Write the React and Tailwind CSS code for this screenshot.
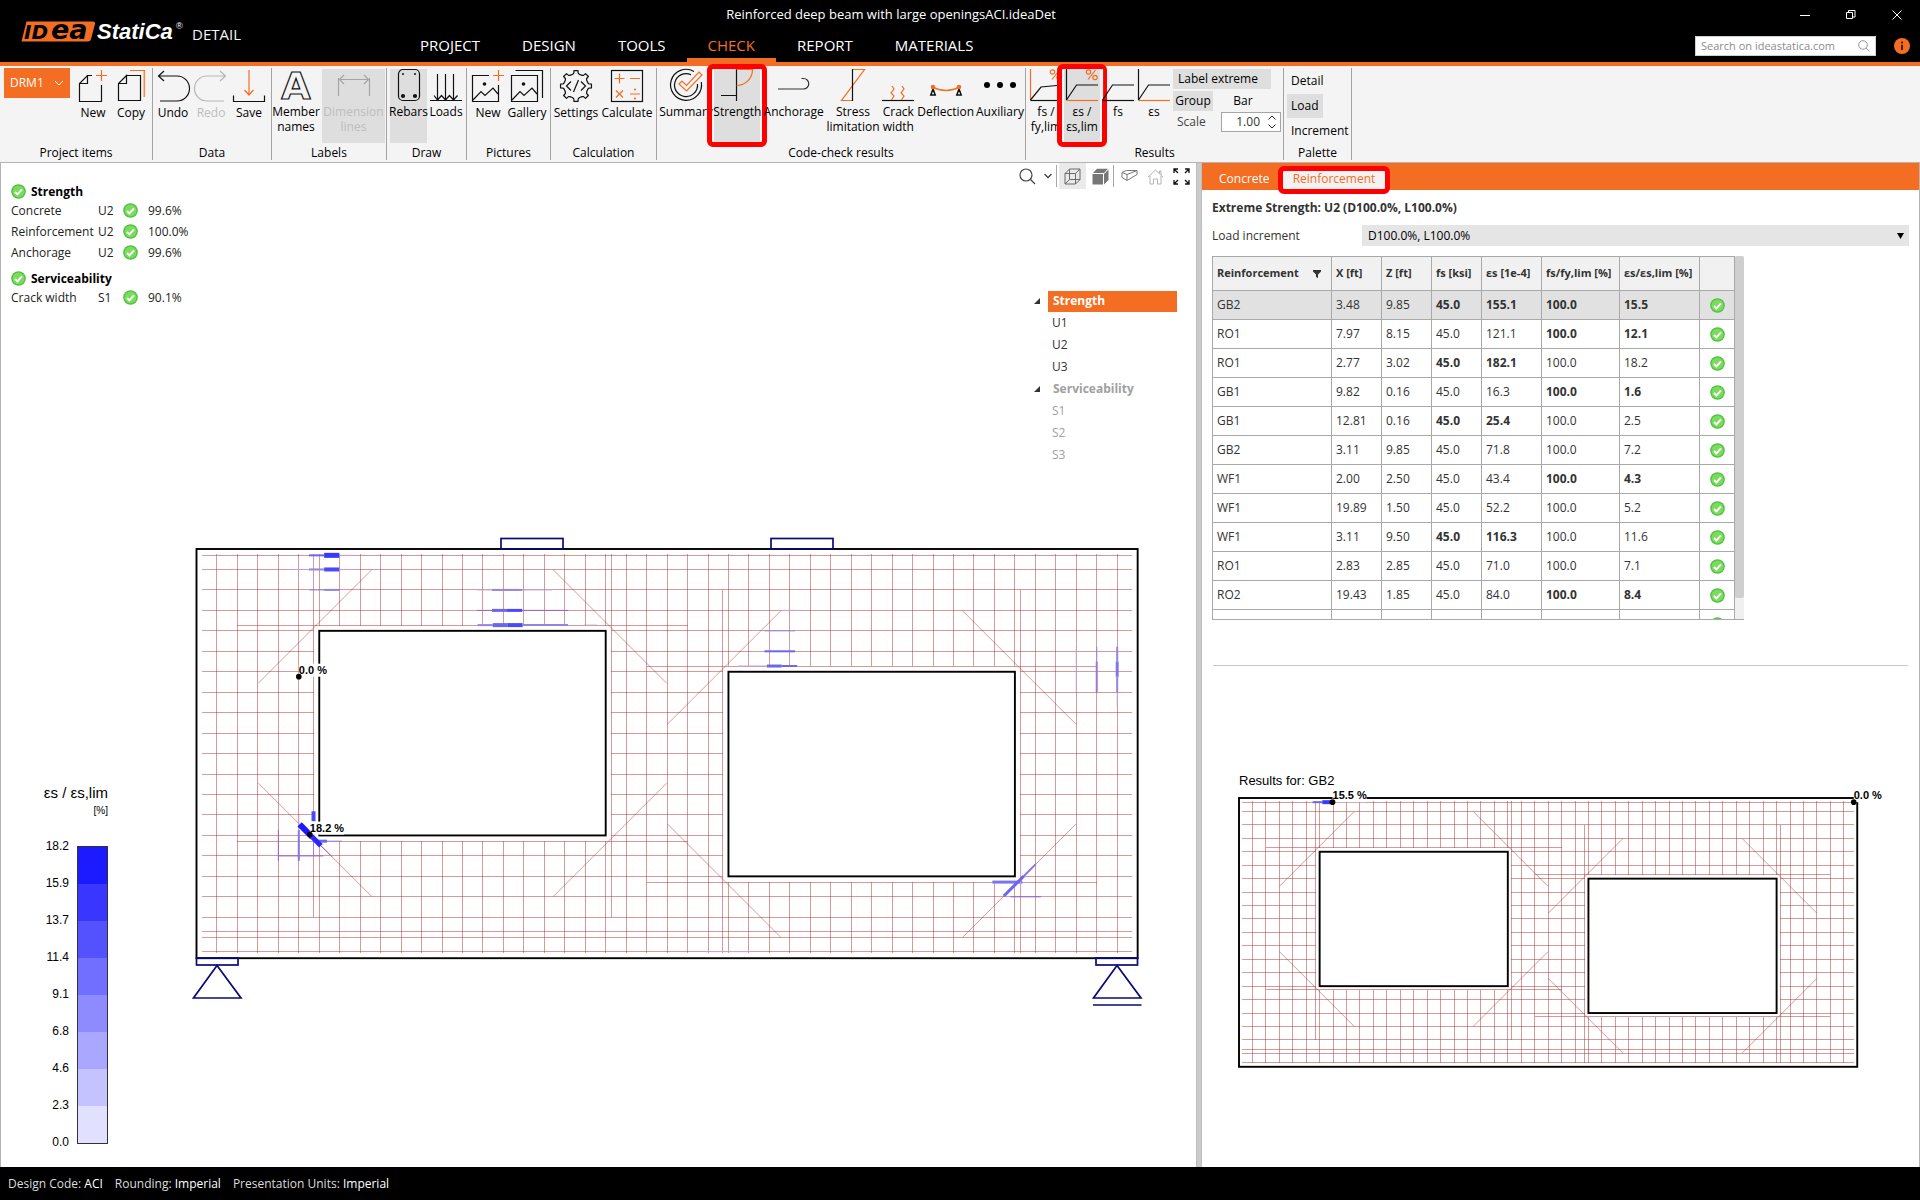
import React from "react";

const ORANGE = "#f36e22";

/* ---------- small icons ---------- */

function Ok({ className = "h-[15px] w-[15px]" }) {
  return (
    <svg viewBox="0 0 15 15" className={`${className} shrink-0`} aria-label="OK" role="img">
      <circle cx="7.5" cy="7.5" r="7.3" fill="#4fbf43" />
      <circle cx="7.5" cy="7.5" r="6" fill="#7bdb5c" />
      <path d="M4 8l2.4 2.4L11 5.4" fill="none" stroke="#fff" strokeWidth="2" />
    </svg>
  );
}

function Icon({ children, className = "" }) {
  return (
    <svg
      viewBox="0 0 32 32"
      className={`h-8 w-8 shrink-0 overflow-visible ${className}`}
      fill="none"
      stroke="#111"
      strokeWidth="1.2"
      aria-hidden="true"
    >
      {children}
    </svg>
  );
}

const gearPath = (() => {
  const pts = [];
  const teeth = 8;
  for (let i = 0; i < teeth; i++) {
    const base = (i * 2 * Math.PI) / teeth - Math.PI / 2;
    [
      [-0.27, 12.2],
      [-0.17, 13],
      [-0.13, 15.6],
      [0.13, 15.6],
      [0.17, 13],
      [0.27, 12.2],
    ].forEach(([a, r]) => {
      pts.push(`${(16 + r * Math.cos(base + a)).toFixed(2)} ${(16 + r * Math.sin(base + a)).toFixed(2)}`);
    });
  }
  return `M${pts.join("L")}Z`;
})();

const icons = {
  newItem: (
    <Icon>
      <path d="M15 5.500H10.500L2.500 13.500V31.500H24.500V15M2.500 13.500H10.500V5.500" />
      <path d="M24.500 0v11M19 5.500h11" stroke={ORANGE} />
    </Icon>
  ),
  copy: (
    <Icon>
      <path d="M11.500 5.500H25.500V30.500H3.500V13.500L11.500 5.500V13.500H3.500" />
      <path d="M15 .5H29.500V27" stroke={ORANGE} />
      <path d="M28.800 1V27" stroke="#f9b48c" />
    </Icon>
  ),
  undo: (
    <Icon>
      <path d="M7 1L1.500 6L7 11M1.500 6H20a12.500 12.500 0 0 1 0 25H3" />
    </Icon>
  ),
  redo: (
    <Icon>
      <path d="M25 1L30.500 6L25 11M30.500 6H12a12.500 12.500 0 0 0 0 25H29" stroke="#b5b5b5" />
    </Icon>
  ),
  save: (
    <Icon>
      <path d="M.5 25.500V31.500H31.500V25.500" />
      <path d="M16 0V25M11.500 20L16 25L20.500 20" stroke={ORANGE} />
    </Icon>
  ),
  names: (
    <Icon>
      <text
        x="16"
        y="29.500"
        textAnchor="middle"
        fontFamily="DejaVu Sans"
        fontWeight="700"
        fontSize="38"
        strokeWidth="1.200"
      >
        A
      </text>
    </Icon>
  ),
  dims: (
    <Icon>
      <path
        d="M.5 9V27M31.500 9V27M1 10.500H31M6 6L1.500 10.500L6 15M26 6L30.500 10.500L26 15"
        stroke="#a5a5a5"
      />
    </Icon>
  ),
  rebars: (
    <Icon>
      <rect x="5.500" y=".5" width="21" height="31" rx="4.500" />
      <g fill="#111" stroke="none">
        <circle cx="10" cy="5" r="1" />
        <circle cx="22" cy="5" r="1" />
        <circle cx="10" cy="27" r="2.100" />
        <circle cx="22" cy="27" r="2.100" />
      </g>
    </Icon>
  ),
  loads: (
    <Icon>
      <path d="M0 31.500H32M7.500 5V31M15.500 5V31M23.500 5V31M4 26.500L7.500 31L11.500 26.500L15.500 31L19.500 26.500L23.500 31L27.500 26.500" />
    </Icon>
  ),
  picNew: (
    <Icon>
      <path d="M17 5.500H.5V31.500H26.500V15M1 30L9 21.500L13 25.500L21 18L26 24" />
      <circle cx="12.500" cy="14" r="1.800" fill="#111" stroke="none" />
      <path d="M26.500 0v11M21 5.500h11" stroke={ORANGE} />
    </Icon>
  ),
  gallery: (
    <Icon>
      <path d="M.5 5.500H26.500V31.500H.5ZM1 30L9 21.500L13 25.500L21 18L26 24M4.500 .5H31.500V28" />
      <circle cx="12.500" cy="14" r="1.800" fill="#111" stroke="none" />
    </Icon>
  ),
  settings: (
    <Icon>
      <path d={gearPath} strokeLinejoin="round" />
      <path d="M11 11.500L6.500 16L11 20.500M21 11.500L25.500 16L21 20.500M18.500 10L13.500 22" />
    </Icon>
  ),
  calculate: (
    <Icon>
      <rect x=".5" y=".5" width="31" height="31" />
      <path
        d="M8.500 3.500v10M3.500 8.500h10M19 8.500h10M5 20.500l7 7M12 20.500l-7 7M19 24h10"
        stroke={ORANGE}
      />
      <circle cx="24" cy="19.500" r="1.100" fill={ORANGE} stroke="none" />
      <circle cx="24" cy="28.500" r="1.100" fill={ORANGE} stroke="none" />
    </Icon>
  ),
  summary: (
    <Icon>
      <path d="M24 2.500A15.500 15.500 0 1 0 31.300 13" />
      <path d="M21 5.700A11.500 11.500 0 1 0 27.500 15" />
      <path d="M9 15L12 12L16.500 16.500L29 3L32 6L16.500 22Z" stroke={ORANGE} />
    </Icon>
  ),
  strength: (
    <Icon>
      <path d="M15.500 0V32M0 26.500H15.500" />
      <path d="M15.500 .5H31.500C31.500 9 25 16.500 15.500 16.500" stroke={ORANGE} />
    </Icon>
  ),
  anchorage: (
    <Icon>
      <path d="M0 20H25.500a5 5 0 0 0 0-10.500h-2" stroke="#333" />
    </Icon>
  ),
  stress: (
    <Icon>
      <path d="M15.500 .5H27.500L4.500 31.500H15.500" stroke={ORANGE} />
      <path d="M15.500 0V32" />
    </Icon>
  ),
  crack: (
    <Icon>
      <path d="M0 31.500H32" />
      <path
        d="M10 17l2 3l-3 4l3 3l-2.500 4M20 17l2 3l-3 4l3 3l-2.500 4"
        stroke={ORANGE}
      />
    </Icon>
  ),
  deflection: (
    <Icon>
      <path d="M3 18C10 22.500 22 22.500 29 18" stroke={ORANGE} strokeWidth="1.500" />
      <path d="M3 20L.8 26H5.200ZM29 20L26.800 26H31.200Z" strokeWidth="1.500" />
      <circle cx="3" cy="18" r="2.300" fill={ORANGE} stroke="none" />
      <circle cx="29" cy="18" r="2.300" fill={ORANGE} stroke="none" />
    </Icon>
  ),
  auxiliary: (
    <Icon>
      <g fill="#000" stroke="none">
        <circle cx="3" cy="16" r="3" />
        <circle cx="16" cy="16" r="3" />
        <circle cx="29" cy="16" r="3" />
      </g>
    </Icon>
  ),
};

function CurveIcon({ axisY, axisX, percent, slope }) {
  return (
    <Icon>
      <path d="M.5 0V31" stroke={axisY} />
      <path d="M.5 31.500H32" stroke={axisX} />
      <path d={slope ? "M.5 31L11 18L32 16" : "M.5 31L10.500 16H32"} />
      {percent && (
        <g stroke={ORANGE}>
          <path d="M22 10.500L29.500 1" />
          <circle cx="22.500" cy="3" r="2.200" />
          <circle cx="29" cy="8.500" r="2.200" />
        </g>
      )}
    </Icon>
  );
}

/* ---------- header ---------- */

function Logo() {
  return (
    <svg viewBox="0 -10 170 42" className="h-[42px] w-[170px]" role="img" aria-label="IDEA StatiCa">
      <path d="M6.500 1.500H73a2 2 0 0 1 2 2.500L71 19a3 3 0 0 1-3 2.500H1.500Z" fill={ORANGE} />
      <g fontFamily="DejaVu Sans" fontWeight="700" fontStyle="italic" fill="#000">
        <text x="4" y="19" fontSize="20">ID</text>
        <text x="31" y="19" fontSize="27">ea</text>
      </g>
      <text x="77" y="19" fill="#fff" fontFamily="Liberation Sans" fontWeight="700" fontStyle="italic" fontSize="22">
        StatiCa
      </text>
      <text x="156" y="9" fill="#fff" fontFamily="Liberation Sans" fontSize="9">®</text>
    </svg>
  );
}

const TABS = ["PROJECT", "DESIGN", "TOOLS", "CHECK", "REPORT", "MATERIALS"];

function Header() {
  return (
    <header className="flex h-[66px] shrink-0 border-b-4 border-[#f36e22] bg-black text-white">
      <div className="flex w-[399px] shrink-0 items-start pt-[10px] pl-5">
        <Logo />
        <span className="ml-0.5 mt-3 text-[15px] leading-6 text-gray-100">DETAIL</span>
      </div>
      <div className="flex min-w-0 flex-1 flex-col">
        <h1 className="h-7 shrink-0 text-center text-[13px] leading-7 font-normal whitespace-nowrap">
          Reinforced deep beam with large openingsACI.ideaDet
        </h1>
        <nav className="flex flex-1">
          {TABS.map((t) => (
            <button
              key={t}
              className={
                t === "CHECK"
                  ? "border-b-4 border-[#f36e22] px-[21px] pt-1 text-[15px] leading-[26px] text-[#f36e22]"
                  : "border-b-4 border-transparent px-[21px] pt-1 text-[15px] leading-[26px]"
              }
            >
              {t}
            </button>
          ))}
        </nav>
      </div>
      <div className="flex w-[537px] shrink-0 flex-col items-end">
        <div className="flex h-9 items-start gap-9 pt-[10px] pr-[18px]">
          <button aria-label="Minimize">
            <svg viewBox="0 0 10 10" className="h-[10px] w-[10px]" stroke="#fff" fill="none">
              <path d="M0 5.500h10" />
            </svg>
          </button>
          <button aria-label="Restore">
            <svg viewBox="0 0 10 10" className="h-[10px] w-[10px]" stroke="#fff" fill="none">
              <path d="M.5 2.500h6v6h-6zM2.500 2.500v-2h6.500v6.500h-2.500" />
            </svg>
          </button>
          <button aria-label="Close">
            <svg viewBox="0 0 10 10" className="h-[10px] w-[10px]" stroke="#fff" fill="none">
              <path d="M.5 .5l9 9M9.500 .5l-9 9" />
            </svg>
          </button>
        </div>
        <div className="flex items-center gap-[18px] pr-[10px]">
          <label className="flex h-5 w-[181px] items-center border border-[#d0d0d0] bg-white px-[5px]">
            <input
              aria-label="Search"
              placeholder="Search on ideastatica.com"
              className="min-w-0 flex-1 bg-transparent text-[11px] text-gray-700 outline-none placeholder:text-[#8c8c8c]"
            />
            <svg viewBox="0 0 12 12" className="h-3 w-3" fill="none" stroke="#999">
              <circle cx="5" cy="5" r="4.300" />
              <path d="M8 8l3.500 3.500" />
            </svg>
          </label>
          <button aria-label="Information">
            <svg viewBox="0 0 16 16" className="h-4 w-4">
              <circle cx="8" cy="8" r="8" fill={ORANGE} />
              <path d="M8 3.500v2M8 6.800v5.200" stroke="#3a1a05" strokeWidth="1.800" />
            </svg>
          </button>
        </div>
      </div>
    </header>
  );
}

/* ---------- ribbon ---------- */

function Tool({ icon, label, width, on, low, disabled, marked }) {
  return (
    <button
      disabled={disabled}
      className={`relative flex h-[74px] shrink-0 flex-col items-center ${width} ${on ? "bg-[#dedede]" : ""} ${
        low ? "pt-px" : ""
      }`}
    >
      {icon}
      <span
        className={`mt-[3px] text-center text-xs leading-[15px] whitespace-pre ${
          disabled ? "text-[#bdbdbd]" : "text-black"
        }`}
      >
        {label}
      </span>
      {marked && (
        <span className="absolute -inset-x-[7px] -top-[5px] -bottom-1 rounded-md border-[5px] border-[#fe0000]" />
      )}
    </button>
  );
}

function Group({ title, width, pad = "", children }) {
  return (
    <section className={`mt-0.5 mb-0.5 flex shrink-0 flex-col border-r border-[#a3a3a3] ${width}`}>
      <div className={`flex h-[75px] pt-px ${pad}`}>{children}</div>
      <h2 className="text-center text-xs leading-5 font-normal text-black">{title}</h2>
    </section>
  );
}

function Ribbon() {
  return (
    <div className="flex h-[97px] shrink-0 border-b border-[#b4b4b4] bg-[#f4f4f4]">
      <Group title="Project items" width="w-[153px]" pad="pl-1">
        <button className="-mt-px mr-1 flex h-[30px] w-[66px] items-center justify-between bg-[#f36e22] px-1.5 text-xs text-white">
          DRM1
          <svg viewBox="0 0 10 6" className="h-1.5 w-[10px]" fill="none" stroke="#fff">
            <path d="M1 1l4 4l4-4" />
          </svg>
        </button>
        <Tool low icon={icons.newItem} label="New" width="w-[38px]" />
        <Tool low icon={icons.copy} label="Copy" width="w-[38px]" />
      </Group>
      <Group title="Data" width="w-[119px]" pad="pl-px">
        <Tool low icon={icons.undo} label="Undo" width="w-[38px]" />
        <Tool low icon={icons.redo} label="Redo" width="w-[38px]" disabled />
        <Tool low icon={icons.save} label="Save" width="w-[38px]" />
      </Group>
      <Group title="Labels" width="w-[115px]" pad="gap-0.5">
        <Tool icon={icons.names} label={"Member\nnames"} width="w-12" />
        <Tool icon={icons.dims} label={"Dimension\nlines"} width="w-[63px]" on disabled />
      </Group>
      <Group title="Draw" width="w-[80px]" pad="gap-px pl-[3px]">
        <Tool icon={icons.rebars} label="Rebars" width="w-[37px]" on />
        <Tool icon={icons.loads} label="Loads" width="w-[36px]" />
      </Group>
      <Group title="Pictures" width="w-[84px]" pad="gap-px pl-0.5">
        <Tool low icon={icons.picNew} label="New" width="w-[38px]" />
        <Tool low icon={icons.gallery} label="Gallery" width="w-[38px]" />
      </Group>
      <Group title="Calculation" width="w-[106px]" pad="gap-px">
        <Tool low icon={icons.settings} label="Settings" width="w-[50px]" />
        <Tool low icon={icons.calculate} label="Calculate" width="w-[50px]" />
      </Group>
      <Group title="Code-check results" width="w-[369px]" pad="justify-between pr-0.5 pl-1">
        <Tool icon={icons.summary} label="Summary" width="w-[50px]" />
        <Tool icon={icons.strength} label="Strength" width="w-[46px]" on marked />
        <Tool icon={icons.anchorage} label="Anchorage" width="w-[60px]" />
        <Tool icon={icons.stress} label={"Stress\nlimitation"} width="w-[52px]" />
        <Tool icon={icons.crack} label={"Crack\nwidth"} width="w-8" />
        <Tool icon={icons.deflection} label="Deflection" width="w-[56px]" />
        <Tool icon={icons.auxiliary} label="Auxiliary" width="w-[46px]" />
      </Group>
      <Group title="Results" width="w-[258px]" pad="pl-0.5">
        <Tool icon={<CurveIcon axisY={ORANGE} axisX="#111" percent slope />} label={"fs /\nfy,lim"} width="w-[36px]" />
        <Tool
          icon={<CurveIcon axisY="#111" axisX={ORANGE} percent />}
          label={"εs /\nεs,lim"}
          width="w-[36px]"
          on
          marked
        />
        <Tool icon={<CurveIcon axisY="#f4f4f4" axisX="#111" />} label="fs" width="w-[36px]" />
        <Tool icon={<CurveIcon axisY="#111" axisX={ORANGE} />} label="εs" width="w-[36px]" />
        <div className="ml-px flex flex-1 flex-col pr-0.5 text-xs text-black">
          <button className="h-5 w-[98px] bg-[#dedede] pl-[5px] text-left leading-5">Label extreme</button>
          <div className="mt-0.5 flex h-5 items-center">
            <button className="h-5 w-10 bg-[#dedede] leading-5">Group</button>
            <button className="ml-[18px] w-6">Bar</button>
          </div>
          <div className="mt-px flex h-5 items-center justify-between">
            <label htmlFor="scale" className="pl-1 text-[#444]">
              Scale
            </label>
            <div className="flex h-5 w-[60px] items-center border border-[#a6a6a6] bg-white pr-1">
              <input
                id="scale"
                defaultValue="1.00"
                className="w-full min-w-0 pr-2 text-right text-xs text-[#333] outline-none"
              />
              <div className="flex flex-col gap-1">
                <button aria-label="Increase scale">
                  <svg viewBox="0 0 8 5" className="block h-[5px] w-2" fill="none" stroke="#222">
                    <path d="M.5 4.500L4 1l3.500 3.500" />
                  </svg>
                </button>
                <button aria-label="Decrease scale">
                  <svg viewBox="0 0 8 5" className="block h-[5px] w-2" fill="none" stroke="#222">
                    <path d="M.5 .5L4 4l3.500-3.500" />
                  </svg>
                </button>
              </div>
            </div>
          </div>
        </div>
      </Group>
      <Group title="Palette" width="w-[68px]" pad="pl-[3px]">
        <div className="flex flex-col items-start gap-0.5 text-xs text-black">
          <button className="h-6 px-1">Detail</button>
          <button className="h-6 bg-[#dedede] px-1">Load</button>
          <button className="h-6 px-1">Increment</button>
        </div>
      </Group>
    </div>
  );
}

/* ---------- beam drawing (dimensions in feet) ---------- */

const LENGTH = 23;
const HEIGHT = 10;
const OPENINGS = [
  { x1: 3, x2: 10, y1: 2, y2: 7 },
  { x1: 13, x2: 20, y1: 3, y2: 8 },
];
const COVER = 0.13;

function meshLines() {
  const lines = [];
  for (let x = 0.5; x <= 22.5; x += 0.5) {
    const o = OPENINGS.find((k) => x >= k.x1 && x <= k.x2);
    if (o) {
      lines.push([x, COVER, x, o.y1 - COVER], [x, o.y2 + COVER, x, HEIGHT - COVER]);
    } else {
      lines.push([x, COVER, x, HEIGHT - COVER]);
    }
  }
  const ys = [0.155, 9.35, 9.5, 9.84];
  for (let y = 0.5; y <= 9; y += 0.5) ys.push(y);
  ys.forEach((y) => {
    let from = COVER;
    OPENINGS.forEach((o) => {
      if (y >= o.y1 && y <= o.y2) {
        lines.push([from, y, o.x1 - COVER, y]);
        from = o.x2 + COVER;
      }
    });
    lines.push([from, y, LENGTH - COVER, y]);
  });
  OPENINGS.forEach((o) => {
    const top = Math.max(COVER, o.y1 - 2);
    const bottom = o.y2 === 8 ? HEIGHT - COVER : o.y2 + 2;
    lines.push([o.x1 - 0.14, top, o.x1 - 0.14, bottom], [o.x2 + 0.14, top, o.x2 + 0.14, bottom]);
    lines.push([o.x1 - 2, o.y1 - 0.14, o.x2 + 2, o.y1 - 0.14], [o.x1 - 2, o.y2 + 0.14, o.x2 + 2, o.y2 + 0.14]);
    lines.push(
      [o.x1 - 1.49, o.y1 + 1.28, o.x1 + 1.28, o.y1 - 1.49],
      [o.x2 - 1.28, o.y1 - 1.49, o.x2 + 1.49, o.y1 + 1.28],
      [o.x1 - 1.49, o.y2 - 1.28, o.x1 + 1.28, o.y2 + 1.49],
      [o.x2 - 1.28, o.y2 + 1.49, o.x2 + 1.49, o.y2 - 1.28]
    );
  });
  return lines;
}

const MESH = meshLines();

function Beam({ x, y, scale, marks, tags }) {
  const px = (v) => x + v * scale;
  const py = (v) => y + v * scale;
  return (
    <g fill="none">
      <g stroke="#a82c2c" strokeOpacity="0.48">
        {MESH.map(([a, b, c, d], i) => (
          <line
            key={i}
            x1={px(a)}
            y1={py(b)}
            x2={px(c)}
            y2={py(d)}
            shapeRendering={a === c || b === d ? "crispEdges" : "auto"}
          />
        ))}
      </g>
      <g stroke="#000" strokeWidth="1.900">
        <rect x={x} y={y} width={LENGTH * scale} height={HEIGHT * scale} />
        {OPENINGS.map((o) => (
          <rect
            key={o.x1}
            x={px(o.x1)}
            y={py(o.y1)}
            width={(o.x2 - o.x1) * scale}
            height={(o.y2 - o.y1) * scale}
            fill="#fff"
          />
        ))}
      </g>
      {marks.map(([a, b, c, d, w, color], i) => (
        <line key={i} x1={px(a)} y1={py(b)} x2={px(c)} y2={py(d)} strokeWidth={w} stroke={color} />
      ))}
      {tags.map((t) => (
        <g key={t.text}>
          <rect x={px(t.x)} y={py(t.y) - 13} width={t.width} height="13" fill="#fff" />
          <circle cx={px(t.x)} cy={py(t.y)} r="2.800" fill="#000" />
          <text x={px(t.x)} y={py(t.y) - 3} fill="#000" fontFamily="Liberation Sans" fontWeight="700" fontSize="11">
            {t.text}
          </text>
        </g>
      ))}
    </g>
  );
}

const FAINT = "#c3a3d3";
const SOFT = "#9484de";
const MID = "#6b66ee";
const STRONG = "#4a48fb";
const FULL = "#2a26fd";

const MAIN_MARKS = [
  [2.75, 0.155, 3.12, 0.155, 2, MID],
  [3.12, 0.155, 3.49, 0.155, 5, "#3a37ff"],
  [3.49, 0.155, 3.85, 0.155, 1, FAINT],
  [2.38, 0.5, 2.75, 0.5, 1, FAINT],
  [2.75, 0.5, 3.12, 0.5, 2, SOFT],
  [3.12, 0.5, 3.49, 0.5, 4, STRONG],
  [3.49, 0.5, 3.85, 0.5, 1, FAINT],
  [2.75, 1, 3.12, 1, 1, SOFT],
  [3.12, 1, 3.49, 1, 2, SOFT],
  [6.85, 1, 7.22, 1, 1, FAINT],
  [7.22, 1, 7.96, 1, 2, SOFT],
  [7.96, 1, 8.69, 1, 1, FAINT],
  [6.85, 1.5, 7.22, 1.5, 1, "#9a62c4"],
  [7.22, 1.5, 7.59, 1.5, 3, MID],
  [7.59, 1.5, 7.96, 1.5, 3, STRONG],
  [7.96, 1.5, 9.08, 1.5, 1, "#9a62c4"],
  [6.87, 1.86, 7.24, 1.86, 2, SOFT],
  [7.24, 1.86, 7.61, 1.86, 4, MID],
  [7.61, 1.86, 7.97, 1.86, 4, STRONG],
  [7.97, 1.86, 9.08, 1.86, 2, SOFT],
  [9.46, 1.86, 9.79, 1.86, 1, FAINT],
  [2.86, 6.41, 2.86, 6.65, 4, STRONG],
  [2.5, 6.5, 2.5, 6.87, 1, FAINT],
  [2.5, 6.87, 2.5, 7.62, 2, "#8277e6"],
  [2, 6.87, 2, 7.62, 1, "#9a62c4"],
  [2.86, 7, 2.86, 7.5, 1, SOFT],
  [2.9, 7.14, 3.19, 7.14, 3, MID],
  [3.19, 7.14, 3.55, 7.14, 1, SOFT],
  [2, 7.5, 3.1, 7.5, 1, "#9a62c4"],
  [2.52, 6.73, 2.83, 7.04, 6, "#1d18ff"],
  [2.83, 7.04, 3.04, 7.25, 5, FULL],
  [3.04, 7.25, 3.31, 7.52, 1, "#8f62d0"],
  [14.3, 1.5, 14.68, 1.5, 1, FAINT],
  [13.88, 2, 14.63, 2, 1, SOFT],
  [13.88, 2.5, 14.63, 2.5, 2, MID],
  [13.23, 2.86, 13.94, 2.86, 1, FAINT],
  [13.94, 2.86, 14.3, 2.86, 3, MID],
  [14.3, 2.86, 14.68, 2.86, 2, MID],
  [21.5, 2.39, 21.5, 3.5, 1, FAINT],
  [22, 2.39, 22, 2.75, 1, SOFT],
  [22, 2.75, 22, 3.5, 2, "#a575cc"],
  [22.5, 2.39, 22.5, 2.75, 2, SOFT],
  [22.5, 2.75, 22.5, 3.12, 3, "#8078ea"],
  [22.5, 3.12, 22.5, 3.5, 2, SOFT],
  [22.5, 3.5, 22.5, 3.85, 1, FAINT],
  [19.45, 8.14, 20.18, 8.14, 3, "#7b74ea"],
  [19.89, 8.5, 20.64, 8.5, 1, "#8a66d8"],
  [20.14, 7.64, 20.14, 8.42, 1, FAINT],
  [19.73, 8.48, 20.22, 7.99, 3, MID],
  [20.22, 7.99, 20.51, 7.7, 2, "#8a76d8"],
  [12.44, 9.84, 13.55, 9.84, 1, "#d0a5c4"],
];

const MAIN_TAGS = [
  { x: 2.5, y: 3.12, text: "0.0 %", width: 28 },
  { x: 2.77, y: 6.98, text: "18.2 %", width: 34 },
];

const PREVIEW_MARKS = [
  [2.74, 0.155, 3.1, 0.155, 2, MID],
  [3.1, 0.155, 3.48, 0.155, 4, "#3a37ff"],
];

const PREVIEW_TAGS = [
  { x: 3.48, y: 0.155, text: "15.5 %", width: 34 },
  { x: 22.87, y: 0.155, text: "0.0 %", width: 28 },
];

function MainDrawing() {
  return (
    <svg
      viewBox="0 0 1195 1004"
      preserveAspectRatio="xMinYMin meet"
      className="absolute inset-0 h-full w-full"
      role="img"
      aria-label="Reinforcement strain utilisation"
    >
      <Beam x={195.5} y={386} scale={40.92} marks={MAIN_MARKS} tags={MAIN_TAGS} />
      <g fill="none" stroke="#0a0a78" strokeWidth="1.700">
        <rect x="500" y="375.500" width="62" height="10.500" />
        <rect x="770" y="375.500" width="62" height="10.500" />
        <rect x="195.500" y="795" width="41.500" height="7" />
        <path d="M216 802.500L192.500 835H240Z" />
        <rect x="1095" y="795" width="41.500" height="7" />
        <path d="M1116 802.500L1092.500 835H1140ZM1092 842H1140.500" />
      </g>
    </svg>
  );
}

/* ---------- left viewport ---------- */

function CheckRow({ name, combo, value }) {
  return (
    <tr className="h-[21px]">
      <td className="w-[87px] p-0">{name}</td>
      <td className="w-[25px] p-0">{combo}</td>
      <td className="w-[25px] p-0">
        <Ok />
      </td>
      <td className="p-0">{value}</td>
    </tr>
  );
}

function CheckBlock({ title, rows }) {
  return (
    <section className="mb-[7px]">
      <h3 className="flex h-[17px] items-center gap-[5px] text-xs font-bold text-black">
        <Ok />
        {title}
      </h3>
      <table className="border-collapse text-xs leading-4 text-[#222]">
        <tbody>
          {rows.map((r) => (
            <CheckRow key={r[0]} name={r[0]} combo={r[1]} value={r[2]} />
          ))}
        </tbody>
      </table>
    </section>
  );
}

const LEGEND = [
  ["18.2", "bg-[#1c1aff]"],
  ["15.9", "bg-[#3836ff]"],
  ["13.7", "bg-[#5452ff]"],
  ["11.4", "bg-[#716fff]"],
  ["9.1", "bg-[#8d8bff]"],
  ["6.8", "bg-[#a9a7ff]"],
  ["4.6", "bg-[#c5c3ff]"],
  ["2.3", "bg-[#e1e0ff]"],
  ["0.0", null],
];

function Legend() {
  return (
    <div className="ml-7 w-[79px] font-['Liberation_Sans',sans-serif] text-black">
      <div className="text-right text-[15px] leading-5 whitespace-nowrap">εs / εs,lim</div>
      <div className="text-right text-[10px] leading-4">[%]</div>
      <div className="mt-[9px] flex items-center justify-end gap-2">
        <div className="text-right text-[12px]">
          {LEGEND.map(([v]) => (
            <div key={v} className="h-[37px] leading-[37px]">
              {v}
            </div>
          ))}
        </div>
        <div className="w-[31px] border border-[#333]">
          {LEGEND.slice(0, 8).map(([v, c]) => (
            <div key={v} className={`h-[37px] ${c}`} />
          ))}
        </div>
      </div>
    </div>
  );
}

function ViewToolbar() {
  return (
    <div className="flex h-[26px] items-center pr-1.5">
      <button aria-label="Zoom">
        <svg viewBox="0 0 17 17" className="h-[17px] w-[17px]" fill="none" stroke="#444" strokeWidth="1.200">
          <circle cx="7" cy="7" r="6" />
          <path d="M11.500 11.500L16 16" />
        </svg>
      </button>
      <button aria-label="Zoom options" className="ml-2">
        <svg viewBox="0 0 8 6" className="h-1.5 w-2" fill="none" stroke="#444" strokeWidth="1.300">
          <path d="M.5 1L4 4.500L7.500 1" />
        </svg>
      </button>
      <span className="ml-1 h-[22px] w-px bg-[#a8a8a8]" />
      <button aria-label="Wireframe" className="ml-0.5 flex h-[26px] w-[27px] items-center justify-center bg-[#eaeaea]">
        <svg viewBox="0 0 17 17" className="h-[17px] w-[17px]" fill="none" stroke="#6a6a6a" strokeLinejoin="round">
          <path d="M1 5.500H11.500V16H1ZM1 5.500L5.500 1H16V11.500L11.500 16M11.500 5.500L16 1M5.500 1V11.500H16M1 16L5.500 11.500" />
        </svg>
      </button>
      <button aria-label="Solid" className="ml-1.5">
        <svg viewBox="0 0 17 17" className="h-[17px] w-[17px]">
          <path d="M.5 6H11V16.500H.5ZM1 5L5 .8H16L12 5ZM12 6L16.500 1.500V12L12 16.500Z" fill="#777" />
        </svg>
      </button>
      <span className="ml-1 h-[22px] w-px bg-[#a8a8a8]" />
      <button aria-label="Section view" className="ml-[7px]">
        <svg viewBox="0 0 17 17" className="h-[17px] w-[17px]" fill="none" stroke="#777" strokeLinejoin="round">
          <path d="M1 4.500L5.500 2.500H16V6.500L6 12.500L1 9.500ZM1 4.500L6 6.500L16 2.500M6 6.500V12.500" />
        </svg>
      </button>
      <button aria-label="Home view" className="ml-[9px]">
        <svg viewBox="0 0 17 17" className="h-[17px] w-[17px]" fill="none" stroke="#b3b3b3">
          <path d="M1 9L8.500 2L16 9M3 8V16H6.500V11H10.500V16H14V8M12.500 5.500V3H14V7" />
        </svg>
      </button>
      <button aria-label="Fit to window" className="ml-[9px]">
        <svg viewBox="0 0 17 17" className="h-[17px] w-[17px]" fill="none" stroke="#111" strokeWidth="1.300">
          <path d="M1 5V1H5M12 1H16V5M1 12V16H5M12 16H16V12M1 1L5 5M16 1L12 5M1 16L5 12M16 16L12 12" />
        </svg>
      </button>
    </div>
  );
}

const TREE = [
  { title: "Strength", items: ["U1", "U2", "U3"], active: true },
  { title: "Serviceability", items: ["S1", "S2", "S3"], active: false },
];

function CaseTree() {
  return (
    <ul className="mt-[101px] mr-[19px] text-xs">
      {TREE.map((g) => (
        <li key={g.title}>
          <div className="flex h-[22px] items-center">
            <svg viewBox="0 0 6 6" className="mr-2 h-1.5 w-1.5">
              <path d="M6 0V6H0Z" fill="#333" />
            </svg>
            <button
              className={
                g.active
                  ? "h-[21px] w-[129px] bg-[#f36e22] pl-[5px] text-left font-bold text-white"
                  : "h-[21px] w-[129px] pl-[5px] text-left font-bold text-[#a0a0a0]"
              }
            >
              {g.title}
            </button>
          </div>
          <ul className="pl-[18px]">
            {g.items.map((i) => (
              <li key={i} className="h-[22px]">
                <button className={g.active ? "leading-[22px] text-[#333]" : "leading-[22px] text-[#a0a0a0]"}>
                  {i}
                </button>
              </li>
            ))}
          </ul>
        </li>
      ))}
    </ul>
  );
}

function Viewport() {
  return (
    <main className="relative min-w-0 flex-1 border-l border-[#b4b4b4] bg-white">
      <MainDrawing />
      <div className="relative flex h-full justify-between">
        <div className="flex flex-col justify-between pb-1.5">
          <div className="pt-5 pl-[10px]">
            <CheckBlock
              title="Strength"
              rows={[
                ["Concrete", "U2", "99.6%"],
                ["Reinforcement", "U2", "100.0%"],
                ["Anchorage", "U2", "99.6%"],
              ]}
            />
            <CheckBlock title="Serviceability" rows={[["Crack width", "S1", "90.1%"]]} />
          </div>
          <Legend />
        </div>
        <div className="flex flex-col items-end">
          <ViewToolbar />
          <CaseTree />
        </div>
      </div>
    </main>
  );
}

/* ---------- right panel ---------- */

const COLUMNS = [
  ["X [ft]", "w-[50px]"],
  ["Z [ft]", "w-[50px]"],
  ["fs [ksi]", "w-[50px]"],
  ["εs [1e-4]", "w-[60px]"],
  ["fs/fy,lim [%]", "w-[78px]"],
  ["εs/εs,lim [%]", "w-[80px]"],
];

/* name, X, Z, fs, εs, fs/fy,lim, εs/εs,lim; a leading * marks an extreme value */
const ROWS = [
  ["GB2", "3.48", "9.85", "*45.0", "*155.1", "*100.0", "*15.5"],
  ["RO1", "7.97", "8.15", "45.0", "121.1", "*100.0", "*12.1"],
  ["RO1", "2.77", "3.02", "*45.0", "*182.1", "100.0", "18.2"],
  ["GB1", "9.82", "0.16", "45.0", "16.3", "*100.0", "*1.6"],
  ["GB1", "12.81", "0.16", "*45.0", "*25.4", "100.0", "2.5"],
  ["GB2", "3.11", "9.85", "45.0", "71.8", "100.0", "7.2"],
  ["WF1", "2.00", "2.50", "45.0", "43.4", "*100.0", "*4.3"],
  ["WF1", "19.89", "1.50", "45.0", "52.2", "100.0", "5.2"],
  ["WF1", "3.11", "9.50", "*45.0", "*116.3", "100.0", "11.6"],
  ["RO1", "2.83", "2.85", "45.0", "71.0", "100.0", "7.1"],
  ["RO2", "19.43", "1.85", "45.0", "84.0", "*100.0", "*8.4"],
  ["", "", "", "", "", "", ""],
];

function ResultsTable() {
  return (
    <div className="mt-[10px] ml-[10px] flex h-[364px] w-[532px] overflow-hidden border-b border-[#a9a9a9]">
      <table className="w-[523px] shrink-0 table-fixed border-collapse self-start text-xs text-[#333]">
        <thead>
          <tr className="h-[34px] bg-[#f1f1f1] text-left text-[11px]">
            <th className="w-[119px] border border-[#a9a9a9] px-1 font-bold">
              <span className="flex items-center justify-between pr-1.5">
                Reinforcement
                <svg viewBox="0 0 8 8" className="h-2 w-2">
                  <path d="M0 0H8V1.500L5 4.500V8L3 7V4.500L0 1.500Z" fill="#333" />
                </svg>
              </span>
            </th>
            {COLUMNS.map(([c, w]) => (
              <th key={c} className={`${w} border border-[#a9a9a9] px-1 font-bold whitespace-nowrap`}>
                {c}
              </th>
            ))}
            <th className="w-[35px] border border-[#a9a9a9]" aria-label="Status" />
          </tr>
        </thead>
        <tbody>
          {ROWS.map((r, i) => (
            <tr key={i} className={i === 0 ? "h-[29px] bg-[#e1e1e1]" : "h-[29px] bg-white"}>
              {r.map((v, j) => (
                <td key={j} className={`border border-[#a9a9a9] px-1 py-0 ${v[0] === "*" ? "font-bold" : ""}`}>
                  {v.replace("*", "")}
                </td>
              ))}
              <td className="border border-[#a9a9a9] p-0">
                <Ok className="mx-auto block h-[15px] w-[15px]" />
              </td>
            </tr>
          ))}
        </tbody>
      </table>
      <div className="w-[9px] bg-[#f0f0f0]">
        <div className="h-[342px] rounded-xs bg-[#cfcfcf]" />
      </div>
    </div>
  );
}

function ResultsPanel() {
  return (
    <aside className="flex w-[718px] shrink-0 flex-col border-r border-[#b4b4b4] bg-white">
      <div className="flex h-[27px] items-start bg-[#f36e22] pl-[17px] text-xs text-white">
        <button className="h-8 w-[50px] whitespace-nowrap">Concrete</button>
        <button className="relative mt-[7px] ml-[13px] h-5 w-[104px] bg-[#f2f2f2] pb-0.5 text-[#f36e22]">
          Reinforcement
          <span className="absolute -inset-x-1 -inset-y-1 rounded-md border-[5px] border-[#fe0000]" />
        </button>
      </div>
      <h2 className="mt-2 ml-[10px] h-5 text-xs leading-5 font-bold text-[#333]">
        Extreme Strength: U2 (D100.0%, L100.0%)
      </h2>
      <div className="mt-[7px] mr-[10px] ml-[10px] flex h-[21px] items-center">
        <label htmlFor="increment" className="w-[150px] shrink-0 text-xs text-[#333]">
          Load increment
        </label>
        <div className="relative h-[21px] flex-1">
          <select
            id="increment"
            className="block h-[21px] w-full appearance-none bg-[#e5e5e5] pl-1.5 text-xs text-black"
          >
            <option>D100.0%, L100.0%</option>
          </select>
          <svg viewBox="0 0 7 6" className="pointer-events-none absolute top-2 right-[5px] h-1.5 w-[7px]">
            <path d="M0 0H7L3.500 6Z" fill="#000" />
          </svg>
        </div>
      </div>
      <ResultsTable />
      <hr className="mt-[45px] mr-[11px] ml-[11px] border-[#c8c8c8]" />
      <h3 className="mt-[106px] ml-[37px] h-4 font-['Liberation_Sans',sans-serif] text-[13px] leading-[18px] font-normal text-black">
        Results for: GB2
      </h3>
      <svg viewBox="0 0 717 290" className="w-full" role="img" aria-label="Results for GB2">
        <Beam x={37} y={10} scale={26.88} marks={PREVIEW_MARKS} tags={PREVIEW_TAGS} />
      </svg>
    </aside>
  );
}

function Status({ label, value }) {
  return (
    <span className="text-[#dcdcdc]">
      {label}: <span className="text-white">{value}</span>
    </span>
  );
}

export default function App() {
  return (
    <div className="flex h-screen flex-col overflow-hidden bg-white font-['Open_Sans','Noto_Sans',sans-serif]">
      <Header />
      <Ribbon />
      <div className="flex min-h-0 flex-1">
        <Viewport />
        <div className="w-1.5 shrink-0 border-x border-[#bdbdbd] bg-[#cbcbcb]" />
        <ResultsPanel />
      </div>
      <footer className="flex h-[33px] shrink-0 items-center gap-3 bg-black pl-2 text-xs">
        <Status label="Design Code" value="ACI" />
        <Status label="Rounding" value="Imperial" />
        <Status label="Presentation Units" value="Imperial" />
      </footer>
    </div>
  );
}
